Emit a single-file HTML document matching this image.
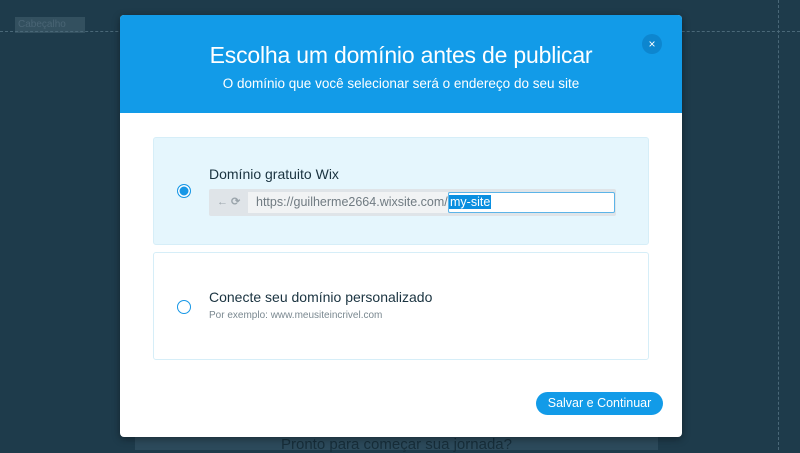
<html><head><style>
body{margin:0;width:800px;height:450px;background:#1e3b4b;font-family:"Liberation Sans",sans-serif;position:relative;overflow:hidden}
.modal{position:absolute;left:120px;top:15px;width:562px;height:422px;background:#fff;border-radius:4px;overflow:hidden;box-shadow:0 2px 8px rgba(0,0,0,.4)}
.hdr{height:98px;background:#129be8;color:#fff;text-align:center;position:relative}
.hdr h1{margin:0;padding-top:27px;font-weight:normal;font-size:23px;letter-spacing:-.2px}
.hdr p{margin:7px 0 0;font-size:13.5px}
.x{position:absolute;left:522px;top:19px;width:20px;height:20px;border-radius:50%;background:#0d86cf;color:#fff;font-size:12px;line-height:20px;text-align:center}
.box{position:absolute;left:33px;width:494px;border:1px solid #d6eef8;border-radius:3px}
.radio{position:absolute;left:23px;width:11px;height:11px;border-radius:50%;border:1.5px solid #1797e6;background:#fff}
.t{position:absolute;left:55px;font-size:14px;color:#1a3340}
</style></head><body>
<div style="position:absolute;left:15px;top:17px;width:67px;height:16px;background:#33505f;color:#4a6575;font-size:10px;line-height:16px;padding-left:3px">Cabeçalho</div>
<div style="position:absolute;left:0;top:31px;width:800px;border-top:1px dashed #4a6878"></div>
<div style="position:absolute;left:778px;top:0;height:450px;border-left:1px dashed #4a6878"></div>
<div style="position:absolute;left:135px;top:437px;width:523px;height:13px;background:#2c4a5b;color:#172e3a;font-size:15px;text-align:center;line-height:16px">Pronto para começar sua jornada?</div>
<div class="modal">
<div class="hdr"><h1>Escolha um domínio antes de publicar</h1><p>O domínio que você selecionar será o endereço do seu site</p><div class="x">×</div></div>
<div class="box" style="top:122px;height:106px;background:#e5f6fd">
<div class="radio" style="top:46px;width:12px;height:12px;background:#1797e6;box-shadow:inset 0 0 0 1.5px #fff"></div>
<div class="t" style="top:28px">Domínio gratuito Wix</div>
<div style="position:absolute;left:55px;top:51px;width:407px;height:27px;background:#dfe4e8;border-radius:2px">
<span style="position:absolute;left:8px;top:6px;color:#9aa4ab;font-size:11px;font-weight:bold">← ⟳</span>
<div style="position:absolute;left:39px;top:3px;width:200px;height:21px;background:#f1f3f4;color:#707b82;font-size:12.5px;line-height:21px;padding-left:8px;box-sizing:border-box">https://guilherme2664.wixsite.com/</div>
<div style="position:absolute;left:239px;top:3px;width:165px;height:19px;background:#fff;border:1px solid #5bb4e8;border-radius:2px"><span style="background:#0a8fe0;color:#fff;font-size:12.5px;line-height:19px;padding:0 1px">my-site</span></div>
</div></div>
<div class="box" style="top:237px;height:106px">
<div class="radio" style="top:47px;width:12px;height:12px"></div>
<div class="t" style="top:36px">Conecte seu domínio personalizado</div>
<div style="position:absolute;left:55px;top:57px;font-size:10px;color:#7a8890">Por exemplo: www.meusiteincrivel.com</div>
</div>
<div style="position:absolute;left:416px;top:377px;width:127px;height:23px;border-radius:12px;background:#129be8;color:#fff;font-size:12.5px;text-align:center;line-height:23px">Salvar e Continuar</div>
</div>
</body></html>
